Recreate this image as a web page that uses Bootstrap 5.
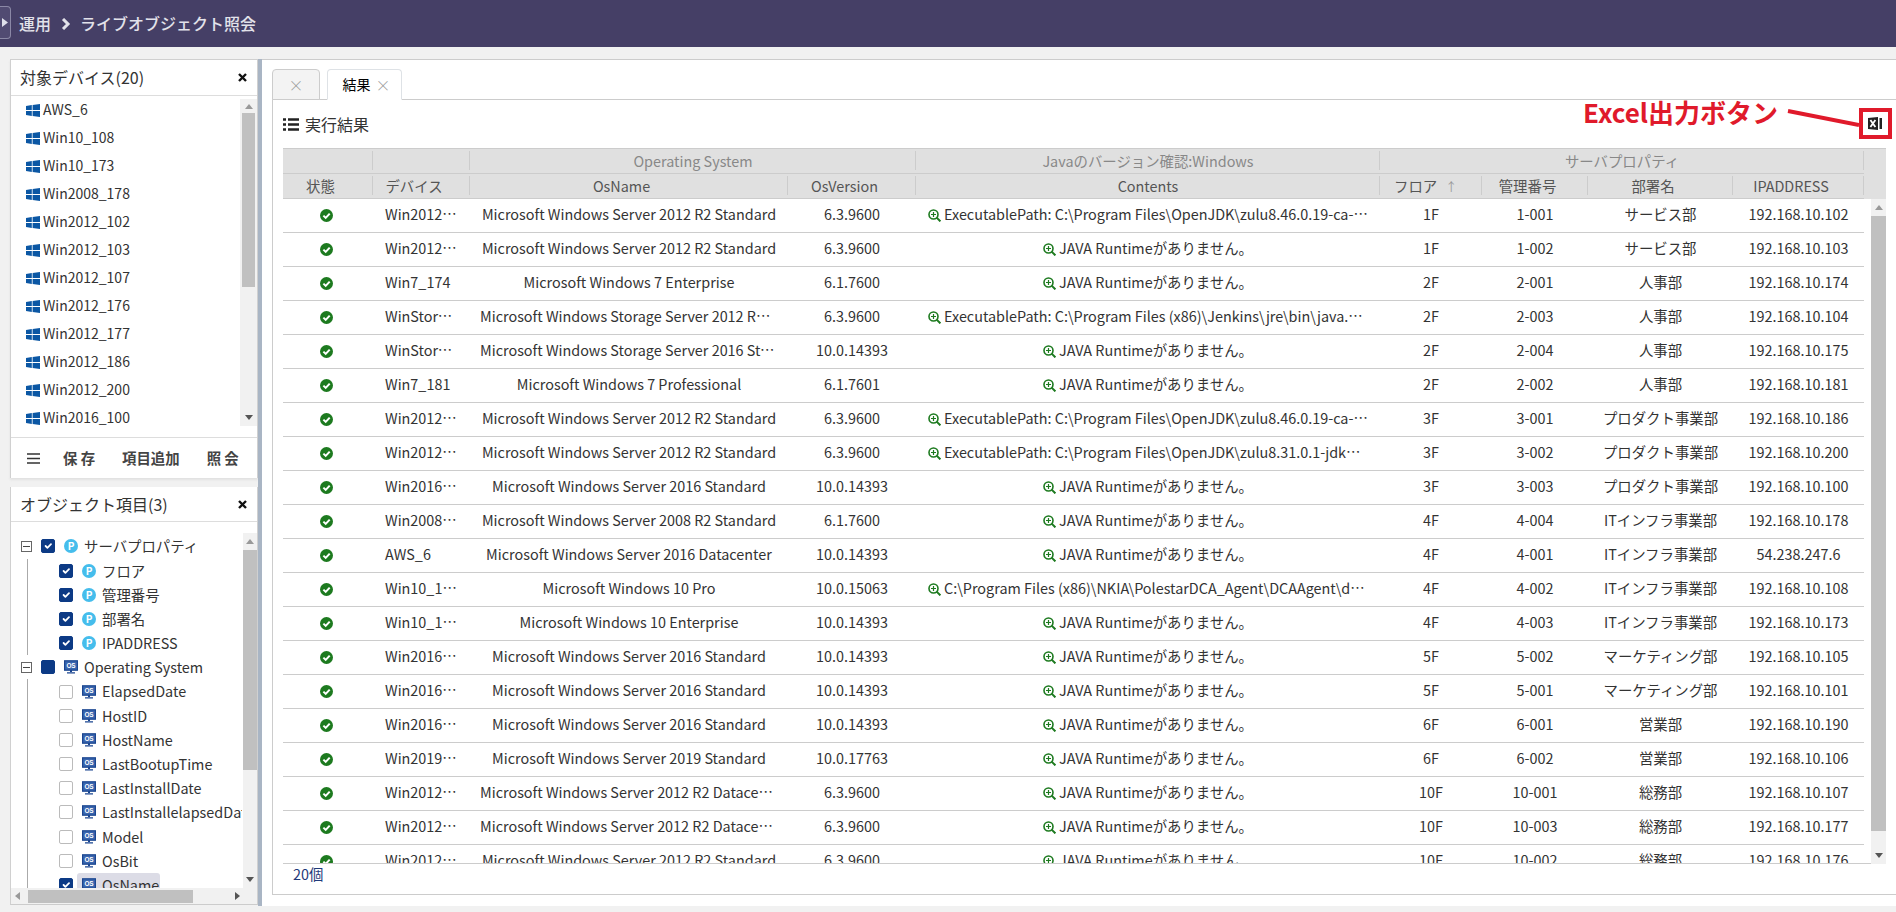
<!DOCTYPE html>
<html lang="ja">
<head>
<meta charset="utf-8">
<title>ライブオブジェクト照会</title>
<link rel="stylesheet" href="https://cdn.jsdelivr.net/npm/bootstrap@5.3.0/dist/css/bootstrap.min.css">
<style>
html,body{height:912px;overflow:hidden}
body{font-family:"Noto Sans CJK JP","Noto Sans",sans-serif;font-size:14px;color:#333;background:#f1f1f1;line-height:1.4}
.top-bar{height:47px;background:#453f66;color:#e2e2ea;font-size:16px;font-weight:500}
.bar-handle{width:11px;height:33px;margin-top:-2px;border:1px solid #8b88a6;border-left:0;border-radius:0 4px 4px 0;background:#514b72}
.shell{height:847px;margin-top:12px;padding-left:10px}
.left-col{width:248px}
.split{width:4px;background:#a9b5c4}
.right-col{background:#fff;border-top:1px solid #ccc;padding:9px 0 0 10px}
.pnl{background:#fff;border:1px solid #d0d0d0;border-bottom:0;border-top:0}
.pnl-1{height:419px;border-top:1px solid #d0d0d0;box-shadow:0 2px 2px #e2e2e2}
.pnl-2{height:418px;margin-top:9px;border-bottom:1px solid #ccc}
.pnl-title{height:36px;padding:0 10px 0 9px;border-bottom:1px solid #ddd;font-size:16px;color:#333}
.dev-list{height:341px}
.dev-items{width:230px}
.dev-row{height:28px;padding-left:15px;gap:3px;white-space:nowrap}
.pnl-foot{height:41px;padding-left:16px;gap:23px;border-top:1px solid #ddd}
.foot-btn{padding:0;border:0;font-size:14.4px;font-weight:700;color:#444;white-space:pre;line-height:1}
.tree-wrap{height:366px}
.tree-main{width:233px;overflow:hidden;padding-top:12px;font-size:14.4px}
.tree-row{height:24.2px;white-space:nowrap}
.tree-root{padding-left:10px}
.tree-kids{margin-left:16px;border-left:1px solid #aaa}
.tree-kid{padding-left:31px}
.exp{width:11px;height:11px;border:1px solid #666;margin-right:9px;flex:none}
.exp::before{content:"";width:7px;border-top:1px solid #444}
.form-check-input.tick{width:14px;height:14px;margin:0 9px 0 0;border-radius:2px;border-color:#bbb;flex:none}
.form-check-input.tick:checked{background-color:#0c3a85;border-color:#0c3a85}
.form-check-input.solid{background-color:#0c3a85;border-color:#0c3a85}
.ico-p{width:14px;height:14px;border-radius:50%;background:#45bdec;color:#fff;font-size:10px;font-weight:700;line-height:1;flex:none;margin-right:6px}
.ico-os{width:14px;height:14px;flex:none;margin-right:6px}
.pick{background:#dcdce6;border-radius:3px;padding:0 1px 0 5px;margin-left:-5px;height:24px}
.sb-v{background:#f1f1f1;flex:none;align-items:center}
.sb-v-1{width:17px;height:327px;margin-top:3px}
.sb-v-2{width:14px;height:355px;margin-top:11px;margin-left:1px}
.sb-v-3{width:15px;height:665px;margin-left:7px}
.sb-cap{height:17px;flex:none}
.sb-thumb{background:#c0c0c0;width:13px;flex:none}
.sb-v-1 .sb-thumb{height:174px}
.sb-v-2 .sb-thumb{height:220px;width:100%}
.sb-v-3 .sb-thumb{height:615px;width:100%}
.sb-v-1 .sb-cap:first-child{height:14px}
.sb-h{height:16px;background:#f1f1f1}
.sb-h-track{width:233px;padding:0 4px}
.sb-h-thumb{width:165px;height:13px;margin-left:8px;background:#c0c0c0}
.tabs-row{border-bottom:1px solid #ccc;gap:7px;height:31px;padding:0}
.tabs-row .nav-link{height:31px;border:1px solid #ccc;border-radius:4px 4px 0 0;padding:0;color:#1f3a7a;font-size:14px;background:#fff}
.tabs-row .nav-link.blank{width:48px;background:#f3f3f3;border-bottom-color:#ccc;margin-bottom:0}
.tabs-row .nav-link.active{width:75px;border-bottom-color:#fff;gap:5px;padding-left:4px}
.x-soft{color:#999;font-size:15px;line-height:1;font-weight:300}
.pane{border-left:1px solid #ccc;border-bottom:1px solid #ccc;padding:0 0 0 10px;height:795px}
.pane-head{height:48px;font-size:16px;gap:6px;color:#333}
.note{position:absolute;right:4px;top:8px;height:31px;color:#e01a2b;font-size:26px;font-weight:700;line-height:1}
.note-txt{margin:-9px 7px 0 0}
.note-box{width:33px;height:31px;border:4px solid #e01a2b;background:#fff}
.xls-btn{padding:0;border:0;line-height:0}
.tb-wrap{width:1603px}
.tb-head{background:#e0e0e0;border-top:1px solid #ccc}
.table.res-tbl{table-layout:fixed;width:1581px;margin:0;--bs-table-bg:transparent;border-color:#ccc}
.table.res-tbl td,.table.res-tbl th{padding:0 12px;vertical-align:middle;text-align:center;white-space:nowrap;overflow:hidden;text-overflow:ellipsis;font-weight:400;font-size:14.4px}
.table.res-tbl th{height:25px;color:#555;padding:2px 27px 0 12px;border-bottom:1px solid #ccc;background-image:linear-gradient(#ccc,#ccc);background-repeat:no-repeat;background-position:right center;background-size:1px 19px;box-shadow:none}
.table.res-tbl th.plain{padding-right:12px}
.table.res-tbl tr.grp th{color:#888;height:24px;padding:0 12px}
.table.res-tbl th.flr{padding:2px 0 0 14px;text-align:left}
.table.res-tbl td{height:34px;color:#333;border-bottom:1px solid #ccc;box-shadow:none;padding-bottom:2px}
.table.res-tbl td.dv{text-align:left}
.table.res-tbl td.st{padding-right:16px}
.table.res-tbl td.nm{padding-left:10px;padding-right:10px}
.table.res-tbl td.cn{padding-left:12px;padding-right:12px}
.sort-up{color:#999;font-size:12px;margin-left:8px}
.tb-body{border-bottom:1px solid #ccc;height:665px}
.tb-clip{width:1581px;height:664px;overflow:hidden;flex:none}
.count{color:#1f3a7a;padding:0 0 0 10px;font-size:14.4px}
.ok{vertical-align:-2px}
.mg{vertical-align:-2px;margin-right:3px}
</style>
</head>
<body>
<svg width="0" height="0" class="d-none">
  <symbol id="win" viewBox="0 0 14 13"><path fill="#0b57a4" d="M0 1.9 5.8 1v5.1H0zM6.6.9 14 0v6.1H6.6zM0 6.9h5.8V12L0 11.1zM6.6 6.9H14V13l-7.4-1z"/></symbol>
  <symbol id="chk" viewBox="0 0 13 13"><circle cx="6.5" cy="6.5" r="6.5" fill="#1d7a1f"/><path fill="none" stroke="#fff" stroke-width="2" d="M3.4 6.6 5.7 8.9 9.7 4.6"/></symbol>
  <symbol id="zm" viewBox="0 0 13 13"><circle cx="5.5" cy="5.5" r="4.5" fill="none" stroke="#1d7a1f" stroke-width="1.6"/><path stroke="#1d7a1f" stroke-width="2" d="M8.6 8.6 12.4 12.4"/><path stroke="#1d7a1f" stroke-width="1.2" d="M3 5.5H8M5.5 3V8"/></symbol>
  <symbol id="osm" viewBox="0 0 14 14"><rect x=".6" y=".8" width="12.8" height="9.4" fill="#3a66ae" stroke="#1a4590" stroke-width="1.2"/><text x="7" y="7.9" text-anchor="middle" font-size="6.4" font-weight="700" fill="#fff" font-family="Liberation Sans">OS</text><path fill="#1a4590" d="M6 10h2v2H6zM3 12.2h8v1.3H3z"/></symbol>
</svg>

<header class="top-bar d-flex align-items-center">
  <div class="bar-handle d-flex align-items-center justify-content-center"><svg width="6" height="9" viewBox="0 0 6 9"><path fill="#dfe0ea" d="M0 0 6 4.5 0 9z"/></svg></div>
  <span class="ms-2">運用</span>
  <svg class="ms-2 me-2" width="13" height="12" viewBox="0 0 13 12"><path fill="none" stroke="#e2e2ea" stroke-width="3" d="M4 1 9 6 4 11"/></svg>
  <span>ライブオブジェクト照会</span>
</header>

<div class="shell d-flex">
  <aside class="left-col d-flex flex-column flex-shrink-0">
    <section class="pnl pnl-1 d-flex flex-column">
      <div class="pnl-title d-flex align-items-center justify-content-between">対象デバイス(20)
        <svg width="9" height="9" viewBox="0 0 9 9"><path stroke="#111" stroke-width="2.4" d="M1 1 8 8M8 1 1 8"/></svg></div>
      <div class="dev-list d-flex justify-content-between">
        <div class="dev-items d-flex flex-column">
          <div class="dev-row d-flex align-items-center"><svg width="14" height="13"><use href="#win"/></svg>AWS_6</div>
          <div class="dev-row d-flex align-items-center"><svg width="14" height="13"><use href="#win"/></svg>Win10_108</div>
          <div class="dev-row d-flex align-items-center"><svg width="14" height="13"><use href="#win"/></svg>Win10_173</div>
          <div class="dev-row d-flex align-items-center"><svg width="14" height="13"><use href="#win"/></svg>Win2008_178</div>
          <div class="dev-row d-flex align-items-center"><svg width="14" height="13"><use href="#win"/></svg>Win2012_102</div>
          <div class="dev-row d-flex align-items-center"><svg width="14" height="13"><use href="#win"/></svg>Win2012_103</div>
          <div class="dev-row d-flex align-items-center"><svg width="14" height="13"><use href="#win"/></svg>Win2012_107</div>
          <div class="dev-row d-flex align-items-center"><svg width="14" height="13"><use href="#win"/></svg>Win2012_176</div>
          <div class="dev-row d-flex align-items-center"><svg width="14" height="13"><use href="#win"/></svg>Win2012_177</div>
          <div class="dev-row d-flex align-items-center"><svg width="14" height="13"><use href="#win"/></svg>Win2012_186</div>
          <div class="dev-row d-flex align-items-center"><svg width="14" height="13"><use href="#win"/></svg>Win2012_200</div>
          <div class="dev-row d-flex align-items-center"><svg width="14" height="13"><use href="#win"/></svg>Win2016_100</div>
        </div>
        <div class="sb-v sb-v-1 d-flex flex-column">
          <div class="sb-cap d-flex align-items-center"><svg width="8" height="5"><path fill="#999" d="M4 0 8 5H0z"/></svg></div>
          <div class="sb-thumb"></div>
          <div class="flex-grow-1"></div>
          <div class="sb-cap d-flex align-items-center"><svg width="8" height="5"><path fill="#555" d="M0 0H8L4 5z"/></svg></div>
        </div>
      </div>
      <div class="pnl-foot d-flex align-items-center">
        <svg width="13" height="11" viewBox="0 0 13 11"><path stroke="#333" stroke-width="1.7" d="M0 1H13M0 5.5H13M0 10H13"/></svg>
        <button type="button" class="btn foot-btn">保 存</button>
        <button type="button" class="btn foot-btn ms-1">項目追加</button>
        <button type="button" class="btn foot-btn ms-1">照 会</button>
      </div>
    </section>
    <section class="pnl pnl-2 d-flex flex-column">
      <div class="pnl-title d-flex align-items-center justify-content-between">オブジェクト項目(3)
        <svg width="9" height="9" viewBox="0 0 9 9"><path stroke="#111" stroke-width="2.4" d="M1 1 8 8M8 1 1 8"/></svg></div>
      <div class="tree-wrap d-flex">
        <div class="tree-main">
          <div class="tree-row tree-root d-flex align-items-center"><span class="exp d-flex align-items-center justify-content-center"></span><input class="form-check-input tick" type="checkbox" checked aria-label="サーバプロパティ"><span class="ico-p d-flex align-items-center justify-content-center">P</span>サーバプロパティ</div>
          <div class="tree-kids">
            <div class="tree-row tree-kid d-flex align-items-center"><input class="form-check-input tick" type="checkbox" checked aria-label="フロア"><span class="ico-p d-flex align-items-center justify-content-center">P</span>フロア</div>
            <div class="tree-row tree-kid d-flex align-items-center"><input class="form-check-input tick" type="checkbox" checked aria-label="管理番号"><span class="ico-p d-flex align-items-center justify-content-center">P</span>管理番号</div>
            <div class="tree-row tree-kid d-flex align-items-center"><input class="form-check-input tick" type="checkbox" checked aria-label="部署名"><span class="ico-p d-flex align-items-center justify-content-center">P</span>部署名</div>
            <div class="tree-row tree-kid d-flex align-items-center"><input class="form-check-input tick" type="checkbox" checked aria-label="IPADDRESS"><span class="ico-p d-flex align-items-center justify-content-center">P</span>IPADDRESS</div>
          </div>
          <div class="tree-row tree-root d-flex align-items-center"><span class="exp d-flex align-items-center justify-content-center"></span><input class="form-check-input tick solid" type="checkbox" aria-label="Operating System"><svg class="ico-os"><use href="#osm"/></svg>Operating System</div>
          <div class="tree-kids">
            <div class="tree-row tree-kid d-flex align-items-center"><input class="form-check-input tick" type="checkbox" aria-label="ElapsedDate"><svg class="ico-os"><use href="#osm"/></svg>ElapsedDate</div>
            <div class="tree-row tree-kid d-flex align-items-center"><input class="form-check-input tick" type="checkbox" aria-label="HostID"><svg class="ico-os"><use href="#osm"/></svg>HostID</div>
            <div class="tree-row tree-kid d-flex align-items-center"><input class="form-check-input tick" type="checkbox" aria-label="HostName"><svg class="ico-os"><use href="#osm"/></svg>HostName</div>
            <div class="tree-row tree-kid d-flex align-items-center"><input class="form-check-input tick" type="checkbox" aria-label="LastBootupTime"><svg class="ico-os"><use href="#osm"/></svg>LastBootupTime</div>
            <div class="tree-row tree-kid d-flex align-items-center"><input class="form-check-input tick" type="checkbox" aria-label="LastInstallDate"><svg class="ico-os"><use href="#osm"/></svg>LastInstallDate</div>
            <div class="tree-row tree-kid d-flex align-items-center"><input class="form-check-input tick" type="checkbox" aria-label="LastInstallelapsedDate"><svg class="ico-os"><use href="#osm"/></svg>LastInstallelapsedDate</div>
            <div class="tree-row tree-kid d-flex align-items-center"><input class="form-check-input tick" type="checkbox" aria-label="Model"><svg class="ico-os"><use href="#osm"/></svg>Model</div>
            <div class="tree-row tree-kid d-flex align-items-center"><input class="form-check-input tick" type="checkbox" aria-label="OsBit"><svg class="ico-os"><use href="#osm"/></svg>OsBit</div>
            <div class="tree-row tree-kid d-flex align-items-center"><input class="form-check-input tick" type="checkbox" checked aria-label="OsName"><span class="pick d-flex align-items-center"><svg class="ico-os"><use href="#osm"/></svg>OsName</span></div>
          </div>
        </div>
        <div class="sb-v sb-v-2 d-flex flex-column">
          <div class="sb-cap d-flex align-items-center"><svg width="8" height="5"><path fill="#999" d="M4 0 8 5H0z"/></svg></div>
          <div class="sb-thumb"></div>
          <div class="flex-grow-1"></div>
          <div class="sb-cap d-flex align-items-center"><svg width="8" height="5"><path fill="#555" d="M0 0H8L4 5z"/></svg></div>
        </div>
      </div>
      <div class="sb-h d-flex">
        <div class="sb-h-track d-flex align-items-center">
          <svg width="5" height="8"><path fill="#999" d="M5 0V8L0 4z"/></svg>
          <div class="sb-h-thumb"></div>
          <svg class="ms-auto" width="5" height="8"><path fill="#555" d="M0 0 5 4 0 8z"/></svg>
        </div>
      </div>
    </section>
  </aside>
  <div class="split flex-shrink-0"></div>
  <main class="right-col flex-grow-1">
    <ul class="nav nav-tabs tabs-row">
      <li class="nav-item"><a class="nav-link blank d-flex align-items-center justify-content-center" href="#"><span class="x-soft">×</span></a></li>
      <li class="nav-item"><a class="nav-link active d-flex align-items-center justify-content-center" href="#">結果<span class="x-soft">×</span></a></li>
    </ul>
    <div class="pane d-flex flex-column">
      <div class="pane-head d-flex align-items-center position-relative">
        <svg width="16" height="13" viewBox="0 0 16 13"><path stroke="#222" stroke-width="2.4" d="M0 1.5H3M5 1.5H16M0 6.5H3M5 6.5H16M0 11.5H3M5 11.5H16"/></svg>
        実行結果
        <div class="note d-flex align-items-start">
          <span class="note-txt">Excel出力ボタン</span>
          <svg width="74" height="31" viewBox="0 0 74 31"><path stroke="#e01a2b" stroke-width="4" d="M3 3 74 17"/></svg>
          <div class="note-box d-flex align-items-center justify-content-center">
            <button type="button" class="btn xls-btn" aria-label="Excel出力">
              <svg width="15" height="13" viewBox="0 0 15 13"><path fill="#222" d="M0 1 10 0V13L0 12z"/><path stroke="#fff" stroke-width="1.8" d="M2.4 3 7.4 10M7.4 3 2.4 10"/><path fill="#222" d="M11.5 1H14V12H11.5z"/></svg>
            </button>
          </div>
        </div>
      </div>
      <div class="tb-wrap">
        <div class="tb-head">
          <table class="table res-tbl">
            <colgroup><col style="width:90px"><col style="width:97px"><col style="width:318px"><col style="width:128px"><col style="width:464px"><col style="width:102px"><col style="width:106px"><col style="width:145px"><col style="width:131px"></colgroup>
            <thead>
              <tr class="grp"><th></th><th></th><th colspan="2">Operating System</th><th>Javaのバージョン確認:Windows</th><th colspan="4">サーバプロパティ</th></tr>
              <tr><th>状態</th><th>デバイス</th><th>OsName</th><th>OsVersion</th><th class="plain">Contents</th><th class="flr">フロア<span class="sort-up">↑</span></th><th>管理番号</th><th>部署名</th><th>IPADDRESS</th></tr>
            </thead>
          </table>
        </div>
        <div class="tb-body d-flex">
          <div class="tb-clip">
            <table class="table res-tbl">
              <colgroup><col style="width:90px"><col style="width:97px"><col style="width:318px"><col style="width:128px"><col style="width:464px"><col style="width:102px"><col style="width:106px"><col style="width:145px"><col style="width:131px"></colgroup>
              <tbody>
                <tr><td class="st"><svg class="ok" width="13" height="13"><use href="#chk"/></svg></td><td class="dv">Win2012_102</td><td class="nm">Microsoft Windows Server 2012 R2 Standard</td><td>6.3.9600</td><td class="cn"><svg class="mg" width="13" height="13"><use href="#zm"/></svg>ExecutablePath: C:\Program Files\OpenJDK\zulu8.46.0.19-ca-jdk8.0.262-win_x64\bin\java.exe</td><td>1F</td><td>1-001</td><td>サービス部</td><td>192.168.10.102</td></tr>
                <tr><td class="st"><svg class="ok" width="13" height="13"><use href="#chk"/></svg></td><td class="dv">Win2012_103</td><td class="nm">Microsoft Windows Server 2012 R2 Standard</td><td>6.3.9600</td><td class="cn"><svg class="mg" width="13" height="13"><use href="#zm"/></svg>JAVA Runtimeがありません。</td><td>1F</td><td>1-002</td><td>サービス部</td><td>192.168.10.103</td></tr>
                <tr><td class="st"><svg class="ok" width="13" height="13"><use href="#chk"/></svg></td><td class="dv">Win7_174</td><td class="nm">Microsoft Windows 7 Enterprise</td><td>6.1.7600</td><td class="cn"><svg class="mg" width="13" height="13"><use href="#zm"/></svg>JAVA Runtimeがありません。</td><td>2F</td><td>2-001</td><td>人事部</td><td>192.168.10.174</td></tr>
                <tr><td class="st"><svg class="ok" width="13" height="13"><use href="#chk"/></svg></td><td class="dv">WinStorage_104</td><td class="nm">Microsoft Windows Storage Server 2012 R2 Standard</td><td>6.3.9600</td><td class="cn"><svg class="mg" width="13" height="13"><use href="#zm"/></svg>ExecutablePath: C:\Program Files (x86)\Jenkins\jre\bin\java.exe version 1.8</td><td>2F</td><td>2-003</td><td>人事部</td><td>192.168.10.104</td></tr>
                <tr><td class="st"><svg class="ok" width="13" height="13"><use href="#chk"/></svg></td><td class="dv">WinStorage_175</td><td class="nm">Microsoft Windows Storage Server 2016 Standard</td><td>10.0.14393</td><td class="cn"><svg class="mg" width="13" height="13"><use href="#zm"/></svg>JAVA Runtimeがありません。</td><td>2F</td><td>2-004</td><td>人事部</td><td>192.168.10.175</td></tr>
                <tr><td class="st"><svg class="ok" width="13" height="13"><use href="#chk"/></svg></td><td class="dv">Win7_181</td><td class="nm">Microsoft Windows 7 Professional</td><td>6.1.7601</td><td class="cn"><svg class="mg" width="13" height="13"><use href="#zm"/></svg>JAVA Runtimeがありません。</td><td>2F</td><td>2-002</td><td>人事部</td><td>192.168.10.181</td></tr>
                <tr><td class="st"><svg class="ok" width="13" height="13"><use href="#chk"/></svg></td><td class="dv">Win2012_186</td><td class="nm">Microsoft Windows Server 2012 R2 Standard</td><td>6.3.9600</td><td class="cn"><svg class="mg" width="13" height="13"><use href="#zm"/></svg>ExecutablePath: C:\Program Files\OpenJDK\zulu8.46.0.19-ca-jdk8.0.262-win_x64\bin\java.exe</td><td>3F</td><td>3-001</td><td>プロダクト事業部</td><td>192.168.10.186</td></tr>
                <tr><td class="st"><svg class="ok" width="13" height="13"><use href="#chk"/></svg></td><td class="dv">Win2012_200</td><td class="nm">Microsoft Windows Server 2012 R2 Standard</td><td>6.3.9600</td><td class="cn"><svg class="mg" width="13" height="13"><use href="#zm"/></svg>ExecutablePath: C:\Program Files\OpenJDK\zulu8.31.0.1-jdk8.0.181-win_x64\bin\java.exe</td><td>3F</td><td>3-002</td><td>プロダクト事業部</td><td>192.168.10.200</td></tr>
                <tr><td class="st"><svg class="ok" width="13" height="13"><use href="#chk"/></svg></td><td class="dv">Win2016_100</td><td class="nm">Microsoft Windows Server 2016 Standard</td><td>10.0.14393</td><td class="cn"><svg class="mg" width="13" height="13"><use href="#zm"/></svg>JAVA Runtimeがありません。</td><td>3F</td><td>3-003</td><td>プロダクト事業部</td><td>192.168.10.100</td></tr>
                <tr><td class="st"><svg class="ok" width="13" height="13"><use href="#chk"/></svg></td><td class="dv">Win2008_178</td><td class="nm">Microsoft Windows Server 2008 R2 Standard</td><td>6.1.7600</td><td class="cn"><svg class="mg" width="13" height="13"><use href="#zm"/></svg>JAVA Runtimeがありません。</td><td>4F</td><td>4-004</td><td>ITインフラ事業部</td><td>192.168.10.178</td></tr>
                <tr><td class="st"><svg class="ok" width="13" height="13"><use href="#chk"/></svg></td><td class="dv">AWS_6</td><td class="nm">Microsoft Windows Server 2016 Datacenter</td><td>10.0.14393</td><td class="cn"><svg class="mg" width="13" height="13"><use href="#zm"/></svg>JAVA Runtimeがありません。</td><td>4F</td><td>4-001</td><td>ITインフラ事業部</td><td>54.238.247.6</td></tr>
                <tr><td class="st"><svg class="ok" width="13" height="13"><use href="#chk"/></svg></td><td class="dv">Win10_108</td><td class="nm">Microsoft Windows 10 Pro</td><td>10.0.15063</td><td class="cn"><svg class="mg" width="13" height="13"><use href="#zm"/></svg>C:\Program Files (x86)\NKIA\PolestarDCA_Agent\DCAAgent\dcaagent\bin\java.exe</td><td>4F</td><td>4-002</td><td>ITインフラ事業部</td><td>192.168.10.108</td></tr>
                <tr><td class="st"><svg class="ok" width="13" height="13"><use href="#chk"/></svg></td><td class="dv">Win10_173</td><td class="nm">Microsoft Windows 10 Enterprise</td><td>10.0.14393</td><td class="cn"><svg class="mg" width="13" height="13"><use href="#zm"/></svg>JAVA Runtimeがありません。</td><td>4F</td><td>4-003</td><td>ITインフラ事業部</td><td>192.168.10.173</td></tr>
                <tr><td class="st"><svg class="ok" width="13" height="13"><use href="#chk"/></svg></td><td class="dv">Win2016_105</td><td class="nm">Microsoft Windows Server 2016 Standard</td><td>10.0.14393</td><td class="cn"><svg class="mg" width="13" height="13"><use href="#zm"/></svg>JAVA Runtimeがありません。</td><td>5F</td><td>5-002</td><td>マーケティング部</td><td>192.168.10.105</td></tr>
                <tr><td class="st"><svg class="ok" width="13" height="13"><use href="#chk"/></svg></td><td class="dv">Win2016_101</td><td class="nm">Microsoft Windows Server 2016 Standard</td><td>10.0.14393</td><td class="cn"><svg class="mg" width="13" height="13"><use href="#zm"/></svg>JAVA Runtimeがありません。</td><td>5F</td><td>5-001</td><td>マーケティング部</td><td>192.168.10.101</td></tr>
                <tr><td class="st"><svg class="ok" width="13" height="13"><use href="#chk"/></svg></td><td class="dv">Win2016_190</td><td class="nm">Microsoft Windows Server 2016 Standard</td><td>10.0.14393</td><td class="cn"><svg class="mg" width="13" height="13"><use href="#zm"/></svg>JAVA Runtimeがありません。</td><td>6F</td><td>6-001</td><td>営業部</td><td>192.168.10.190</td></tr>
                <tr><td class="st"><svg class="ok" width="13" height="13"><use href="#chk"/></svg></td><td class="dv">Win2019_106</td><td class="nm">Microsoft Windows Server 2019 Standard</td><td>10.0.17763</td><td class="cn"><svg class="mg" width="13" height="13"><use href="#zm"/></svg>JAVA Runtimeがありません。</td><td>6F</td><td>6-002</td><td>営業部</td><td>192.168.10.106</td></tr>
                <tr><td class="st"><svg class="ok" width="13" height="13"><use href="#chk"/></svg></td><td class="dv">Win2012_107</td><td class="nm">Microsoft Windows Server 2012 R2 Datacenter</td><td>6.3.9600</td><td class="cn"><svg class="mg" width="13" height="13"><use href="#zm"/></svg>JAVA Runtimeがありません。</td><td>10F</td><td>10-001</td><td>総務部</td><td>192.168.10.107</td></tr>
                <tr><td class="st"><svg class="ok" width="13" height="13"><use href="#chk"/></svg></td><td class="dv">Win2012_177</td><td class="nm">Microsoft Windows Server 2012 R2 Datacenter</td><td>6.3.9600</td><td class="cn"><svg class="mg" width="13" height="13"><use href="#zm"/></svg>JAVA Runtimeがありません。</td><td>10F</td><td>10-003</td><td>総務部</td><td>192.168.10.177</td></tr>
                <tr><td class="st"><svg class="ok" width="13" height="13"><use href="#chk"/></svg></td><td class="dv">Win2012_176</td><td class="nm">Microsoft Windows Server 2012 R2 Standard</td><td>6.3.9600</td><td class="cn"><svg class="mg" width="13" height="13"><use href="#zm"/></svg>JAVA Runtimeがありません。</td><td>10F</td><td>10-002</td><td>総務部</td><td>192.168.10.176</td></tr>
              </tbody>
            </table>
          </div>
          <div class="sb-v sb-v-3 d-flex flex-column">
            <div class="sb-cap d-flex align-items-center"><svg width="8" height="5"><path fill="#999" d="M4 0 8 5H0z"/></svg></div>
            <div class="sb-thumb"></div>
            <div class="flex-grow-1"></div>
            <div class="sb-cap d-flex align-items-center"><svg width="8" height="5"><path fill="#555" d="M0 0H8L4 5z"/></svg></div>
          </div>
        </div>
        <div class="count">20個</div>
      </div>
    </div>
  </main>
</div>
<script src="https://cdn.jsdelivr.net/npm/bootstrap@5.3.0/dist/js/bootstrap.bundle.min.js"></script>
</body>
</html>
